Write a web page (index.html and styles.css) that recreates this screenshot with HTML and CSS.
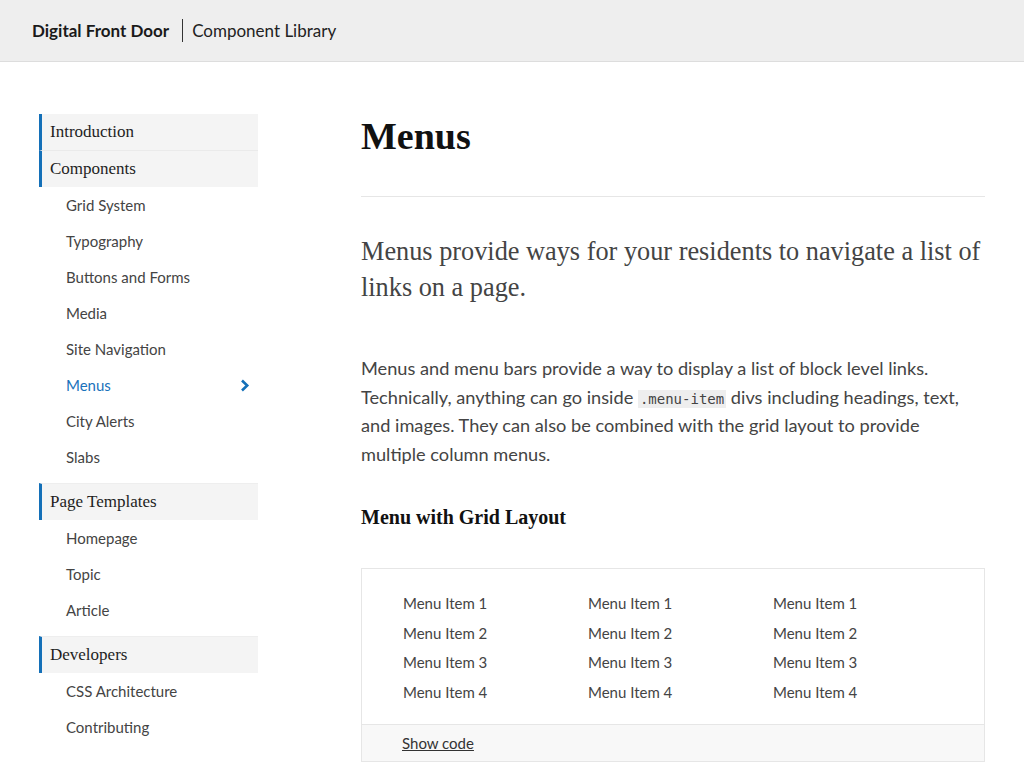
FILE: index.html
```html
<!DOCTYPE html>
<html lang="en">
<head>
<meta charset="utf-8">
<title>Menus - Component Library</title>
<link rel="stylesheet" href="styles.css">
</head>
<body>
<header class="topbar">
  <span class="brand">Digital Front Door</span>
  <span class="divider"></span>
  <span class="product">Component Library</span>
</header>
<div class="page">
  <nav class="sidebar">
    <div class="nav-head">Introduction</div>
    <div class="nav-head">Components</div>
    <ul class="nav-list">
      <li>Grid System</li>
      <li>Typography</li>
      <li>Buttons and Forms</li>
      <li>Media</li>
      <li>Site Navigation</li>
      <li class="active">Menus
        <svg class="chev" width="10" height="13" viewBox="0 0 10 13"><path d="M2 1.5 L7.2 6.5 L2 11.5" fill="none" stroke="currentColor" stroke-width="2.6"/></svg>
      </li>
      <li>City Alerts</li>
      <li>Slabs</li>
    </ul>
    <div class="nav-head sep">Page Templates</div>
    <ul class="nav-list">
      <li>Homepage</li>
      <li>Topic</li>
      <li>Article</li>
    </ul>
    <div class="nav-head sep">Developers</div>
    <ul class="nav-list">
      <li>CSS Architecture</li>
      <li>Contributing</li>
    </ul>
  </nav>
  <main class="content">
    <h1 class="title">Menus</h1>
    <hr class="rule">
    <p class="lead">Menus provide ways for your residents to navigate a list of links on a page.</p>
    <p class="body">Menus and menu bars provide a way to display a list of block level links. Technically, anything can go inside <code class="code">.menu-item</code> divs including headings, text, and images. They can also be combined with the grid layout to provide multiple column menus.</p>
    <h3 class="subtitle">Menu with Grid Layout</h3>
    <div class="demo">
      <div class="demo-grid">
        <ul class="menu"><li>Menu Item 1</li><li>Menu Item 2</li><li>Menu Item 3</li><li>Menu Item 4</li></ul>
        <ul class="menu"><li>Menu Item 1</li><li>Menu Item 2</li><li>Menu Item 3</li><li>Menu Item 4</li></ul>
        <ul class="menu"><li>Menu Item 1</li><li>Menu Item 2</li><li>Menu Item 3</li><li>Menu Item 4</li></ul>
      </div>
      <div class="demo-foot"><span class="show-code">Show code</span></div>
    </div>
  </main>
</div>
</body>
</html>
```
FILE: styles.css
```css
html, body {
  margin: 0;
  padding: 0;
  background: #fff;
}
body {
  font-family: Lato, "Open Sans", sans-serif;
  color: #444;
}
.topbar {
  height: 61px;
  background: #eeeeee;
  border-bottom: 1px solid #dddddd;
  display: flex;
  align-items: center;
  padding-left: 32px;
}
.brand {
  font-weight: 700;
  font-size: 17px;
  color: #1a1a1a;
}
.divider {
  width: 1px;
  height: 23px;
  background: #333;
  margin: 0 9px 0 13px;
}
.product {
  font-size: 17px;
  color: #222;
}
.page {
  display: flex;
  padding: 52px 39px 0 39px;
  gap: 103px;
}
.sidebar {
  width: 219px;
  flex: none;
}
.nav-head {
  height: 36px;
  line-height: 36px;
  background: #f4f4f4;
  border-left: 3px solid #1470b8;
  padding-left: 8px;
  font-family: "Liberation Serif", serif;
  font-size: 17px;
  color: #1e1e1e;
}
.nav-head + .nav-head {
  border-top: 1px solid #eaeaea;
}
.nav-head.sep {
  margin-top: 8px;
  border-top: 1px solid #eeeeee;
}
.nav-list {
  list-style: none;
  margin: 0;
  padding: 0;
}
.nav-list li {
  height: 36px;
  line-height: 36px;
  padding-left: 27px;
  padding-right: 8px;
  font-size: 15px;
  color: #444;
  display: flex;
  align-items: center;
  justify-content: space-between;
}
.nav-list li.active {
  color: #1a72bb;
}
.chev {
  display: block;
  color: #1470b8;
}
.content {
  width: 624px;
  flex: none;
}
.title {
  margin: 0;
  font-family: "Liberation Serif", serif;
  font-weight: 700;
  font-size: 38px;
  line-height: 44px;
  color: #111;
}
.rule {
  border: 0;
  border-top: 1px solid #e6e6e6;
  margin: 38px 0 0 0;
}
.lead {
  margin: 37px 0 0 0;
  font-family: "Liberation Serif", serif;
  font-size: 26.3px;
  line-height: 36px;
  color: #444;
}
.body {
  margin: 48px 0 0 0;
  font-size: 18.2px;
  line-height: 28.5px;
  color: #444;
}
.code {
  font-family: "DejaVu Sans Mono", monospace;
  font-size: 14px;
  line-height: 1;
  background: #eeeeee;
  padding: 1px 2px;
  color: #444;
}
.subtitle {
  margin: 35px 0 0 0;
  font-family: "Liberation Serif", serif;
  font-weight: 700;
  font-size: 20px;
  line-height: 28px;
  color: #111;
}
.demo {
  margin-top: 37px;
  border: 1px solid #e6e6e6;
}
.demo-grid {
  display: grid;
  grid-template-columns: 185px 185px 185px;
  padding: 20px 41px 17px 41px;
}
.menu {
  list-style: none;
  margin: 0;
  padding: 0;
}
.menu li {
  font-size: 15px;
  line-height: 29.6px;
  color: #444;
}
.demo-foot {
  background: #f8f8f8;
  border-top: 1px solid #e6e6e6;
  height: 36px;
  display: flex;
  align-items: center;
  padding-left: 40px;
}
.show-code {
  font-size: 15px;
  color: #333;
  text-decoration: underline;
}
```
